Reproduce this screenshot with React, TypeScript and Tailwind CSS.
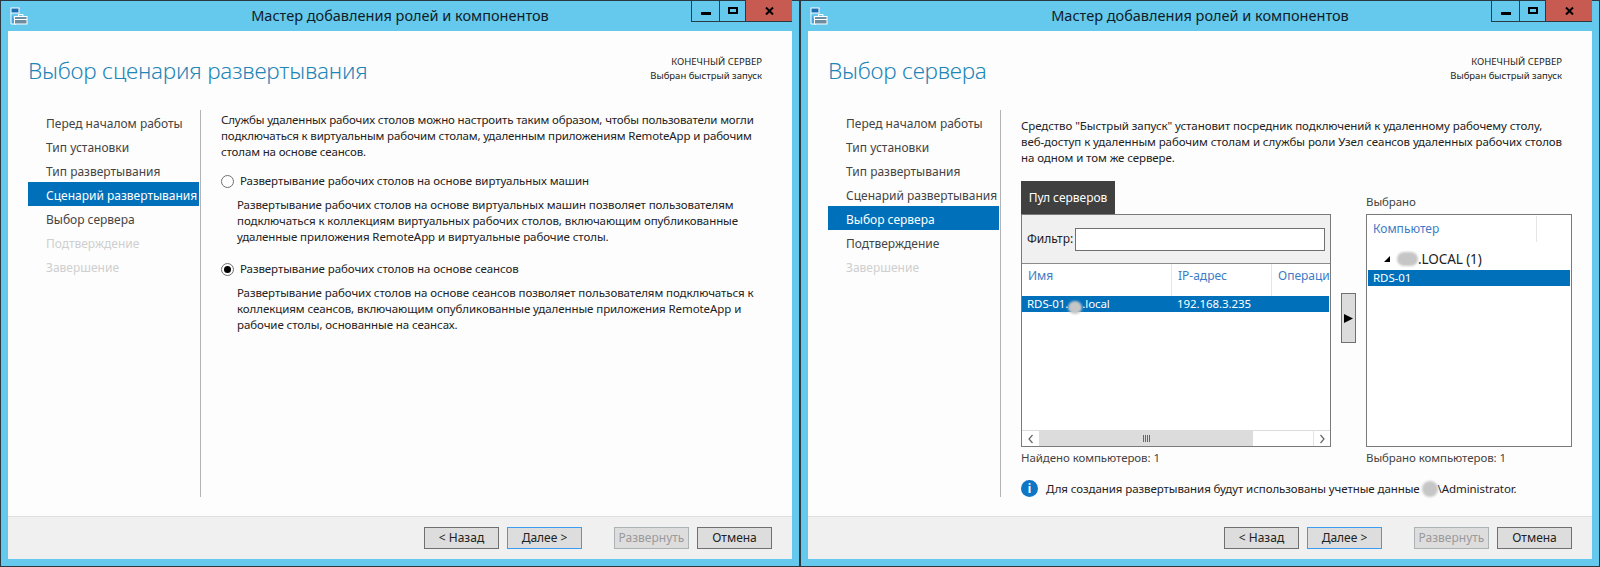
import type { ReactNode } from "react";

const navItems = [
  "Перед началом работы",
  "Тип установки",
  "Тип развертывания",
  "Сценарий развертывания",
  "Выбор сервера",
  "Подтверждение",
  "Завершение",
];

const Blob = ({ className }: { className: string }) => (
  <span className={`inline-block rounded-full bg-[#c6c6c6] blur-[1px] align-middle ${className}`} />
);

const AppIcon = () => (
  <svg width="18" height="18" viewBox="0 0 18 18" fill="none" className="ml-[2px]">
    <rect x="1" y="1" width="8" height="5" fill="#1a6fb5" stroke="#fff" />
    <path d="M1 6v11h5" stroke="#fff" fill="#4ba3d8" />
    <rect x="4.5" y="9.5" width="12.5" height="7.5" fill="#6c8ea3" stroke="#fff" />
    <path d="M8.5 9V7.5h4.5V9M5 12.5h12" stroke="#fff" />
  </svg>
);

const WindowButtons = () => (
  <div className="flex h-[22px] border-b border-l border-[#2b3a42]">
    <div className="flex w-[28px] items-center justify-center border-r border-[#2b3a42]">
      <div className="mt-[5px] h-[3px] w-[10px] bg-black" />
    </div>
    <div className="flex w-[26px] items-center justify-center border-r border-[#2b3a42]">
      <div className="h-[7px] w-[10px] border-2 border-black" />
    </div>
    <div className="flex w-[46px] items-center justify-center bg-[#c75b52]">
      <svg width="9" height="8" viewBox="0 0 9 8">
        <path d="M1 0.5l7 7M8 0.5l-7 7" stroke="#000" strokeWidth="2" />
      </svg>
    </div>
  </div>
);

const Button = ({ label, tone }: { label: string; tone?: "focus" | "disabled" }) => {
  const border =
    tone === "focus"
      ? "border-[#3d9bf0] text-[#222]"
      : tone === "disabled"
        ? "border-[#adb2b5] text-[#9a9a9a]"
        : "border-[#707070] text-[#222]";
  return (
    <div className={`flex h-[22px] w-[75px] items-center justify-center border bg-[#dddddd] ${border}`}>
      {label}
    </div>
  );
};

const Radio = ({ checked }: { checked?: boolean }) => (
  <span className="flex h-[13px] w-[13px] items-center justify-center rounded-full border border-[#707070] bg-white">
    {checked && <span className="h-[7px] w-[7px] rounded-full bg-black" />}
  </span>
);

const WizardWindow = ({
  heading,
  active,
  enabledTo,
  children,
}: {
  heading: string;
  active: number;
  enabledTo: number;
  children: ReactNode;
}) => (
  <div className="flex h-[567px] w-[800px] flex-col border border-[#2b3a42] bg-[#64c9ec] px-[7px] pb-[7px]">
    <div className="flex h-[30px] shrink-0 items-start">
      <div className="mt-[6px] w-[101px]">
        <AppIcon />
      </div>
      <div className="flex-1 pt-[4px] text-center text-[14.5px] text-[#10202a]">
        Мастер добавления ролей и компонентов
      </div>
      <div className="-mt-px">
        <WindowButtons />
      </div>
    </div>
    <div className="flex flex-1 flex-col bg-[#fdfdfd]">
      <div className="flex h-[79px] shrink-0 justify-between pr-[30px] pl-[20px]">
        <h1 className="pt-[22px] text-[22.5px] leading-[36px] font-light tracking-[-0.2px] text-[#1f86b8]">
          {heading}
        </h1>
        <div className="pt-[24px] text-right text-[9.5px] leading-[14px] text-[#222]">
          <div>КОНЕЧНЫЙ СЕРВЕР</div>
          <div>Выбран быстрый запуск</div>
        </div>
      </div>
      <div className="flex h-[387px] shrink-0 pl-[20px]">
        <nav className="w-[171px] shrink-0">
          {navItems.map((item, i) => (
            <div
              key={item}
              className={`flex h-[24px] items-center pt-[3px] pl-[18px] ${
                i === active ? "bg-[#0070bb] text-white" : i > enabledTo ? "text-[#cfcfcf]" : "text-[#444]"
              }`}
            >
              {item}
            </div>
          ))}
        </nav>
        <div className="ml-px w-px bg-[#b4b4b4]" />
        <div className="flex-1 pl-[20px] text-[11.5px] tracking-[-0.08px] text-[#222]">{children}</div>
      </div>
      <div className="mt-[19px] flex flex-1 items-center justify-end border-t border-[#dfdfdf] bg-[#f0f0f0] pr-[20px]">
        <Button label="< Назад" />
        <div className="ml-2">
          <Button label="Далее >" tone="focus" />
        </div>
        <div className="ml-8">
          <Button label="Развернуть" tone="disabled" />
        </div>
        <div className="ml-2">
          <Button label="Отмена" />
        </div>
      </div>
    </div>
  </div>
);

const ScenarioStep = () => (
  <div className="pt-[2px] leading-[16px]">
    <p className="tracking-[-0.15px]">
      Службы удаленных рабочих столов можно настроить таким образом, чтобы пользователи могли
      <br />
      подключаться к виртуальным рабочим столам, удаленным приложениям RemoteApp и рабочим
      <br />
      столам на основе сеансов.
    </p>
    <div className="mt-[13px] flex items-center">
      <Radio />
      <span className="ml-[6px]">Развертывание рабочих столов на основе виртуальных машин</span>
    </div>
    <p className="mt-[8px] pl-[16px]">
      Развертывание рабочих столов на основе виртуальных машин позволяет пользователям
      <br />
      подключаться к коллекциям виртуальных рабочих столов, включающим опубликованные
      <br />
      удаленные приложения RemoteApp и виртуальные рабочие столы.
    </p>
    <div className="mt-[16px] flex items-center">
      <Radio checked />
      <span className="ml-[6px]">Развертывание рабочих столов на основе сеансов</span>
    </div>
    <p className="mt-[8px] pl-[16px]">
      Развертывание рабочих столов на основе сеансов позволяет пользователям подключаться к
      <br />
      коллекциям сеансов, включающим опубликованные удаленные приложения RemoteApp и
      <br />
      рабочие столы, основанные на сеансах.
    </p>
  </div>
);

const ScrollArrow = ({ d, className }: { d: string; className?: string }) => (
  <div className={`flex w-[17px] items-center justify-center bg-white ${className ?? ""}`}>
    <svg width="6" height="10" viewBox="0 0 6 10" fill="none">
      <path d={d} stroke="#666" strokeWidth="1.2" />
    </svg>
  </div>
);

const ServerStep = () => (
  <div className="pt-[8px] leading-[16px]">
    <p>
      Средство "Быстрый запуск" установит посредник подключений к удаленному рабочему столу,
      <br />
      веб-доступ к удаленным рабочим столам и службы роли Узел сеансов удаленных рабочих столов
      <br />
      на одном и том же сервере.
    </p>
    <div className="mt-[15px] flex">
      <div className="w-[310px]">
        <div className="flex h-[33px] w-[94px] items-center justify-center bg-[#404040] text-[12px] tracking-normal text-white">
          Пул серверов
        </div>
        <div className="flex h-[233px] flex-col border border-[#7a7a7a] bg-white">
          <div className="flex h-[49px] shrink-0 items-center border-b border-[#8a8a8a] bg-[#f0f0f0] pr-[5px] pl-[5px] text-[12px] tracking-normal">
            <span className="w-[48px]">Фильтр:</span>
            <div className="h-[23px] flex-1 border border-[#707070] bg-white" />
          </div>
          <div className="flex h-[32px] shrink-0 text-[12px] tracking-normal text-[#3d7cc4]">
            <div className="w-[150px] border-r border-[#e6e6e6] pt-[4px] pl-[6px]">Имя</div>
            <div className="w-[100px] border-r border-[#e6e6e6] pt-[4px] pl-[6px]">IP-адрес</div>
            <div className="flex-1 overflow-hidden pt-[4px] pl-[6px] whitespace-nowrap">Операции</div>
          </div>
          <div className="mr-px flex h-[16px] shrink-0 items-center bg-[#0070bb] pl-[5px] text-white">
            <span className="flex w-[150px] items-center">
              RDS-01.
              <Blob className="h-[13px] w-[14px] translate-y-[3px]" />
              .local
            </span>
            <span>192.168.3.235</span>
          </div>
          <div className="flex-1" />
          <div className="flex h-[16px] shrink-0 border-t border-[#dcdcdc]">
            <ScrollArrow d="M4.5 1L1 5l3.5 4" />
            <div className="flex w-[214px] items-center justify-center gap-px bg-[#dcdcdc]">
              <span className="h-[7px] w-px bg-[#666]" />
              <span className="h-[7px] w-px bg-[#666]" />
              <span className="h-[7px] w-px bg-[#666]" />
              <span className="h-[7px] w-px bg-[#666]" />
            </div>
            <div className="flex-1" />
            <ScrollArrow d="M1.5 1L5 5 1.5 9" className="border-l border-[#e4e4e4]" />
          </div>
        </div>
        <div className="mt-[3px] text-[#444]">Найдено компьютеров: 1</div>
      </div>
      <div className="mt-[112px] ml-[10px] flex h-[50px] w-[15px] items-center justify-center border border-[#707070] bg-[#dcdcdc]">
        <svg width="9" height="9" viewBox="0 0 9 9">
          <path d="M0 0l9 4.5L0 9z" fill="#000" />
        </svg>
      </div>
      <div className="ml-[10px] w-[206px]">
        <div className="flex h-[33px] items-end pb-[4px] text-[#444]">Выбрано</div>
        <div className="flex h-[233px] flex-col border border-[#7a7a7a] bg-white p-px">
          <div className="flex h-[26px] shrink-0 text-[12px] tracking-normal text-[#3d7cc4]">
            <div className="w-[169px] border-r border-[#e6e6e6] pt-[5px] pl-[5px]">Компьютер</div>
          </div>
          <div className="flex h-[28px] shrink-0 items-center pt-[5px] pl-[15px] text-[13.5px]">
            <svg width="8" height="8" viewBox="0 0 8 8">
              <path d="M7 1v6H1z" fill="#000" />
            </svg>
            <Blob className="ml-[6px] h-[14px] w-[21px]" />
            <span>.LOCAL (1)</span>
          </div>
          <div className="flex h-[16px] shrink-0 items-center bg-[#0070bb] pl-[5px] text-white">RDS-01</div>
        </div>
        <div className="mt-[3px] text-[#444]">Выбрано компьютеров: 1</div>
      </div>
    </div>
    <div className="mt-[14px] flex items-center">
      <span className="flex h-[17px] w-[17px] items-center justify-center rounded-full bg-[#0f75c5] font-bold text-white">
        i
      </span>
      <span className="ml-[8px] flex items-center">
        Для создания развертывания будут использованы учетные данные
        <Blob className="ml-[2px] h-[16px] w-[16px]" />
        \Administrator.
      </span>
    </div>
  </div>
);

export default function App() {
  return (
    <div className="flex w-[1600px] text-[12px] font-['Noto_Sans',sans-serif]">
      <WizardWindow heading="Выбор сценария развертывания" active={3} enabledTo={4}>
        <ScenarioStep />
      </WizardWindow>
      <WizardWindow heading="Выбор сервера" active={4} enabledTo={5}>
        <ServerStep />
      </WizardWindow>
    </div>
  );
}
